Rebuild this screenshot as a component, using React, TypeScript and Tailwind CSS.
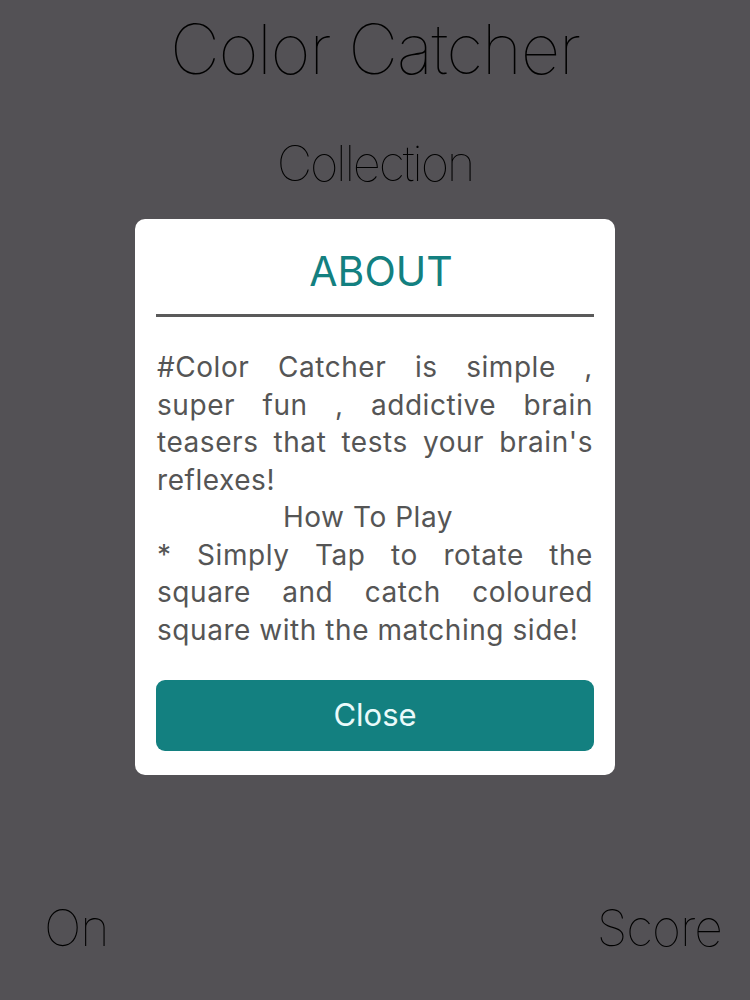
import React from "react";

const J = "text-justify [text-align-last:justify]";

export default function App() {
  return (
    <div className="relative w-[750px] h-[1000px] bg-[#535155] overflow-hidden" style={{ fontFamily: "Inter, 'Liberation Sans', sans-serif" }}>
      <div className="flex flex-col h-full">
        <div className="pt-[5px] text-center text-[69px] leading-[88px] font-thin text-black tracking-[-1.4px]">Color Catcher</div>
        <div className="mt-[41px] text-center text-[49px] leading-[60px] font-thin text-black tracking-[-2.2px]">Collection</div>
        <div className="flex-1" />
        <div className="flex justify-between pl-[44px] pr-[28px] pb-[42px] text-[50px] leading-[60px] font-thin text-black tracking-[-1px]">
          <span>On</span>
          <span>Score</span>
        </div>
      </div>

      <div className="absolute left-[135px] top-[219px] w-[480px] h-[556px] bg-white rounded-[10px] px-[21px] pt-[24px] flex flex-col">
        <div className="text-center text-[41px] leading-[56px] text-[#138080] pl-[12px]">ABOUT</div>
        <div className="mt-[15px] h-[3px] bg-[#5a5a5a]" />
        <div className="mt-[32px] px-[1px] text-[28px] tracking-[0.55px] leading-[37.5px] text-[#555555]">
          <p className={J}>#Color Catcher is simple ,</p>
          <p className={J}>super fun , addictive brain</p>
          <p className={J}>teasers that tests your brain's</p>
          <p>reflexes!</p>
          <p className="text-center pr-[14px]">How To Play</p>
          <p className={J}>* Simply Tap to rotate the</p>
          <p className={J}>square and catch coloured</p>
          <p>square with the matching side!</p>
        </div>
        <button className="mt-[31px] h-[71px] w-full rounded-[9px] bg-[#138080] text-[#eafafa] text-[31px]">Close</button>
      </div>
    </div>
  );
}
